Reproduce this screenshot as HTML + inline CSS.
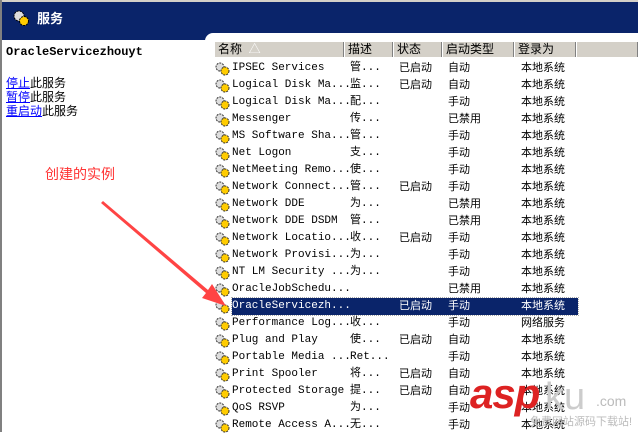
<!DOCTYPE html><html><head><meta charset="utf-8"><style>
*{margin:0;padding:0}
body{width:638px;height:432px;overflow:hidden;background:#fff;position:relative;font-family:"Liberation Mono","Noto Sans CJK SC",monospace;font-size:12px;color:#000}
.cj{font-family:"Liberation Sans","Noto Sans CJK SC",sans-serif}
#top{position:absolute;left:0;top:0;width:638px;height:2px;background:#d4d0c8}
#title{position:absolute;left:2px;top:2px;width:636px;height:38px;background:#0a246a}
#lb{position:absolute;left:0;top:0;width:2px;height:432px;background:#808080}
#right{position:absolute;left:205px;top:33px;width:433px;height:399px;background:#fff;border-top-left-radius:8px}
.hdr{position:absolute;top:42px;height:15px;background:#d4d0c8;border-right:1px solid #808080;border-left:1px solid #fff;font-size:12px;line-height:15px;padding-left:3px;box-sizing:border-box}
.row{position:absolute;left:214px;height:17px;line-height:17px;width:364px;font-size:11px}
.row span{position:absolute;top:0;white-space:pre}
.ic{position:absolute;left:0;top:2px;width:16px;height:14px}
.selbg{position:absolute;left:18px;top:0;width:346px;height:17px;background:#0a246a;outline:1px dotted #aaa}
.row.s{color:#fff}
a{color:#00f}
</style></head><body>
<div id="top"></div><div id="title"></div><div id="lb"></div>
<svg style="position:absolute;left:12px;top:9px" width="18" height="18"><circle cx="7" cy="7" r="5" fill="#ddd" stroke="#000" stroke-dasharray="2 1"/><circle cx="12" cy="12" r="4.5" fill="#fc0" stroke="#000" stroke-dasharray="2 1"/></svg>
<div class="cj" style="position:absolute;left:37px;top:8px;color:#fff;font-weight:bold;font-size:13px">服务</div>
<div id="right"></div>
<div style="position:absolute;left:6px;top:45px;font-weight:bold;font-size:12px">OracleServicezhouyt</div>
<div class="cj" style="position:absolute;left:6px;top:76px;font-size:12px;line-height:14px"><a href="#">停止</a>此服务<br><a href="#">暂停</a>此服务<br><a href="#">重启动</a>此服务</div>
<div class="cj" style="position:absolute;left:45px;top:164px;color:#f33;font-size:14px">创建的实例</div>
<div class="hdr cj" style="left:214px;width:130px">名称 &nbsp;<span style="color:#fff">△</span></div>
<div class="hdr cj" style="left:344px;width:49px">描述</div>
<div class="hdr cj" style="left:393px;width:49px">状态</div>
<div class="hdr cj" style="left:442px;width:72px">启动类型</div>
<div class="hdr cj" style="left:514px;width:62px">登录为</div>
<div class="hdr" style="left:576px;width:62px"></div>
<div id="rows"></div>
<script>
var d=[["IPSEC Services","管...","已启动","自动","本地系统"],["Logical Disk Ma...","监...","已启动","自动","本地系统"],["Logical Disk Ma...","配...","","手动","本地系统"],["Messenger","传...","","已禁用","本地系统"],["MS Software Sha...","管...","","手动","本地系统"],["Net Logon","支...","","手动","本地系统"],["NetMeeting Remo...","使...","","手动","本地系统"],["Network Connect...","管...","已启动","手动","本地系统"],["Network DDE","为...","","已禁用","本地系统"],["Network DDE DSDM","管...","","已禁用","本地系统"],["Network Locatio...","收...","已启动","手动","本地系统"],["Network Provisi...","为...","","手动","本地系统"],["NT LM Security ...","为...","","手动","本地系统"],["OracleJobSchedu...","","","已禁用","本地系统"],["OracleServicezh...","","已启动","手动","本地系统"],["Performance Log...","收...","","手动","网络服务"],["Plug and Play","使...","已启动","自动","本地系统"],["Portable Media ...","Ret...","","手动","本地系统"],["Print Spooler","将...","已启动","自动","本地系统"],["Protected Storage","提...","已启动","自动","本地系统"],["QoS RSVP","为...","","手动","本地系统"],["Remote Access A...","无...","","手动","本地系统"]];
var h="";var ic='<svg class="ic" viewBox="0 0 16 14"><circle cx="6" cy="5" r="4" fill="#ddd" stroke="#333" stroke-dasharray="2 1"/><circle cx="11" cy="9" r="4" fill="#fc0" stroke="#333" stroke-dasharray="2 1"/></svg>';
d.forEach(function(r,i){var t=60+i*17;h+='<div class="row'+(i==14?' s':'')+'" style="top:'+t+'px">'+(i==14?'<div class="selbg"></div>':'')+ic+'<span style="left:18px">'+r[0]+'</span><span style="left:136px">'+r[1]+'</span><span class="cj" style="left:185px">'+r[2]+'</span><span class="cj" style="left:234px">'+r[3]+'</span><span class="cj" style="left:307px">'+r[4]+'</span></div>';});
document.getElementById('rows').innerHTML=h;
</script>
<svg style="position:absolute;left:0;top:0" width="638" height="432"><path d="M103 201 L208 290 L212 284 L226 306 L202 298 L206 293 L101 203Z" fill="#f44"/></svg>
<div style="position:absolute;left:470px;top:370px;font-family:'Liberation Sans',sans-serif;font-weight:bold;font-style:italic;font-size:42px;color:#d22;letter-spacing:-1px">asp</div>
<div style="position:absolute;left:545px;top:376px;font-family:'Liberation Sans',sans-serif;font-size:38px;color:#ccc">ku</div>
<div style="position:absolute;left:596px;top:393px;font-family:'Liberation Sans',sans-serif;font-size:14px;color:#bbb">.com</div>
<div class="cj" style="position:absolute;left:530px;top:413px;font-size:11px;color:#bbb">免费网站源码下载站!</div>
</body></html>
